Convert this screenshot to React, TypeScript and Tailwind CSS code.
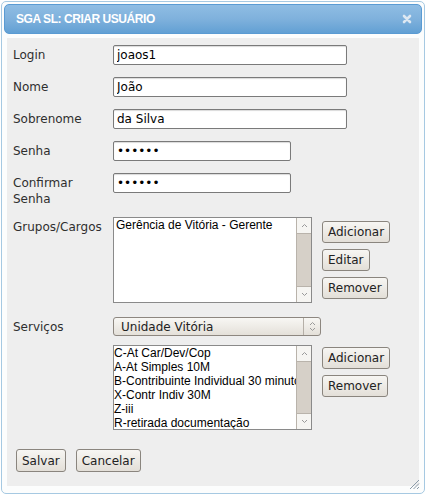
import React from 'react';

const font = { fontFamily: '"DejaVu Sans", Verdana, sans-serif' };

const Btn: React.FC<{ label: string; className?: string }> = ({ label, className = '' }) => (
    <button
        className={`h-[22px] px-[5px] border border-[#8a857e] rounded-[3px] bg-gradient-to-b from-[#f7f6f3] to-[#e3dfd8] text-[12px] text-[#222] leading-none whitespace-nowrap ${className}`}
        style={font}
    >
        {label}
    </button>
);

const Label: React.FC<{ children: React.ReactNode }> = ({ children }) => (
    <div className="w-[100px] shrink-0 pt-[2px] text-[12px] leading-4 text-[#2e2e2e]">{children}</div>
);

const TextInput: React.FC<{ value: string; w: string; type?: string }> = ({ value, w, type = 'text' }) => (
    <input
        type={type}
        readOnly
        defaultValue={value}
        className={`${w} h-[20px] px-[3px] border border-[#7a7a7a] rounded-[2px] bg-white text-[12px] text-black shadow-[inset_0_1px_1px_rgba(0,0,0,0.15)] outline-none`}
        style={font}
    />
);

const Chevron: React.FC<{ up?: boolean }> = ({ up }) => (
    <svg width="7" height="5" viewBox="0 0 7 5">
        <path d={up ? 'M1 4 L3.5 1.5 L6 4' : 'M1 1 L3.5 3.5 L6 1'} fill="none" stroke="#9a9a9a" strokeWidth="1" />
    </svg>
);

const ListBox: React.FC<{ items: string[]; h: string; pad: string }> = ({ items, h, pad }) => (
    <div className={`w-[199px] ${h} border border-[#8a8a8a] bg-white flex`}>
        <div
            className={`flex-1 overflow-hidden ${pad} text-[12px] leading-[14px] text-black whitespace-nowrap`}
            style={{ fontFamily: '"Liberation Sans", Arial, sans-serif' }}
        >
            {items.map((it) => (
                <div key={it}>{it}</div>
            ))}
        </div>
        <div className="w-[15px] shrink-0 flex flex-col bg-[#d6d0c8] border-l border-[#b9b3ab]">
            <div className="h-[16px] bg-[#f6f5f2] border-b border-[#b9b3ab] flex items-center justify-center">
                <Chevron up />
            </div>
            <div className="flex-1" />
            <div className="h-[16px] bg-[#f6f5f2] border-t border-[#b9b3ab] flex items-center justify-center">
                <Chevron />
            </div>
        </div>
    </div>
);

export default function App() {
    return (
        <div className="w-[426px] h-[495px] bg-white p-px" style={font}>
            <div className="relative h-[493px] border border-[#a6c9e2] rounded-[5px] bg-[#fcfdfd] p-[2px] flex flex-col">
                <div className="h-[30px] shrink-0 border border-[#5a9bd3] rounded-[5px] bg-gradient-to-b from-[#8fbde4] via-[#7fb1dc] to-[#62a0d4] flex items-center justify-between pl-[11px] pr-[9px]">
                    <span
                        className="text-[12px] font-bold text-white tracking-[-0.45px]"
                        style={{ fontFamily: '"Liberation Sans", Arial, sans-serif' }}
                    >
                        SGA SL: CRIAR USUÁRIO
                    </span>
                    <svg width="10" height="10" viewBox="0 0 10 10">
                        <path d="M2 2 L8 8 M8 2 L2 8" stroke="#dde8f2" strokeWidth="2.6" strokeLinecap="round" />
                    </svg>
                </div>

                <div className="mt-[4px] mx-[3px] h-[448px] bg-[#eeeeee] pl-[6px] pt-[7px] flex flex-col">
                    <div className="flex">
                        <Label>Login</Label>
                        <TextInput value="joaos1" w="w-[234px]" />
                    </div>
                    <div className="flex mt-3">
                        <Label>Nome</Label>
                        <TextInput value="João" w="w-[234px]" />
                    </div>
                    <div className="flex mt-3">
                        <Label>Sobrenome</Label>
                        <TextInput value="da Silva" w="w-[234px]" />
                    </div>
                    <div className="flex mt-3">
                        <Label>Senha</Label>
                        <TextInput value="123456" type="password" w="w-[178px]" />
                    </div>
                    <div className="flex items-start mt-3">
                        <Label>
                            Confirmar
                            <br />
                            Senha
                        </Label>
                        <TextInput value="123456" type="password" w="w-[178px]" />
                    </div>

                    <div className="flex items-start mt-[10px]">
                        <Label>Grupos/Cargos</Label>
                        <ListBox items={['Gerência de Vitória - Gerente']} h="h-[86px]" pad="pl-[2px]" />
                        <div className="ml-[10px] pt-[4px] flex flex-col items-start gap-[6px]">
                            <Btn label="Adicionar" />
                            <Btn label="Editar" />
                            <Btn label="Remover" />
                        </div>
                    </div>

                    <div className="flex items-start mt-[14px]">
                        <Label>Serviços</Label>
                        <div className="w-[208px] h-[19px] border border-[#8d8780] rounded-[3px] bg-gradient-to-b from-[#f8f7f4] to-[#e4e0d9] flex items-center">
                            <span className="flex-1 pl-[7px] text-[12px] text-[#222] leading-none">Unidade Vitória</span>
                            <div className="w-[17px] h-full border-l border-[#b5afa7] flex flex-col items-center justify-center gap-[1px]">
                                <Chevron up />
                                <Chevron />
                            </div>
                        </div>
                    </div>

                    <div className="flex items-start mt-[9px] pl-[100px]">
                        <ListBox
                            items={[
                                'C-At Car/Dev/Cop',
                                'A-At Simples 10M',
                                'B-Contribuinte Individual 30 minutos',
                                'X-Contr Indiv 30M',
                                'Z-iii',
                                'R-retirada documentação',
                            ]}
                            h="h-[85px]"
                            pad="pl-0"
                        />
                        <div className="ml-[10px] pt-[2px] flex flex-col items-start gap-[6px]">
                            <Btn label="Adicionar" />
                            <Btn label="Remover" />
                        </div>
                    </div>

                    <div className="flex gap-[10px] mt-[19px] pl-[3px]">
                        <Btn label="Salvar" className="h-[23px]" />
                        <Btn label="Cancelar" className="h-[23px]" />
                    </div>
                </div>

                <svg className="absolute right-[4px] bottom-[3px]" width="12" height="12" viewBox="0 0 12 12">
                    <path d="M11 2 L2 11 M11 5.5 L5.5 11 M11 9 L9 11" stroke="#8a9aa8" strokeWidth="1" />
                </svg>
            </div>
        </div>
    );
}
